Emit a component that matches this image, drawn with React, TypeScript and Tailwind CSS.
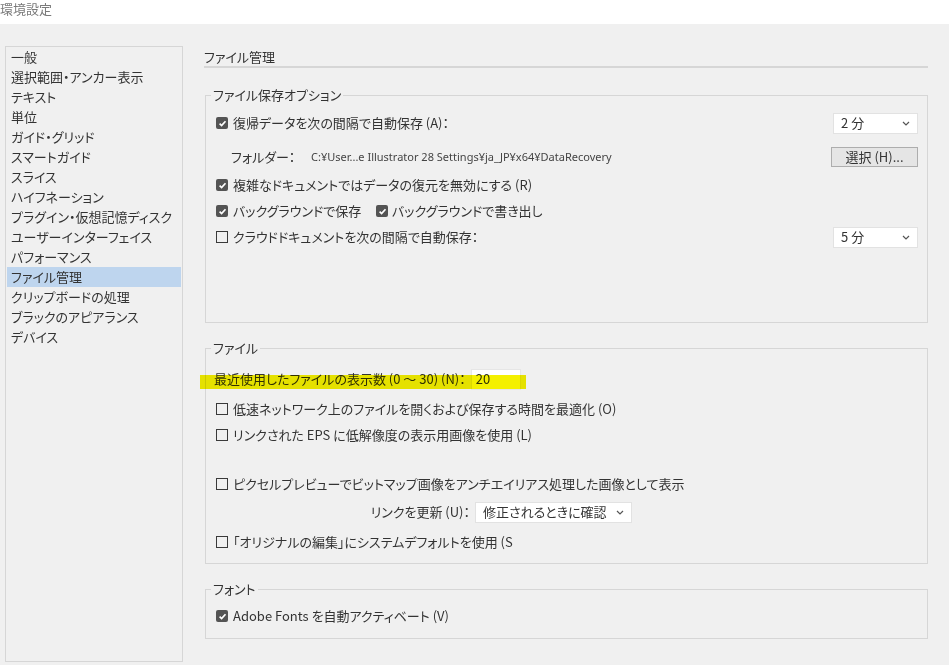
import React from "react";

const menuItems = [
  "一般",
  "選択範囲・アンカー表示",
  "テキスト",
  "単位",
  "ガイド・グリッド",
  "スマートガイド",
  "スライス",
  "ハイフネーション",
  "プラグイン・仮想記憶ディスク",
  "ユーザーインターフェイス",
  "パフォーマンス",
  "ファイル管理",
  "クリップボードの処理",
  "ブラックのアピアランス",
  "デバイス",
];

const Check = ({ on }: { on?: boolean }) =>
  on ? (
    <span className="flex h-[12px] w-[12px] shrink-0 items-center justify-center rounded-[2px] bg-[#545454]">
      <svg width="9" height="9" viewBox="0 0 9 9">
        <path d="M1.6 4.7 3.6 6.6 7.5 2.3" stroke="#fff" strokeWidth="1.7" fill="none" />
      </svg>
    </span>
  ) : (
    <span className="h-[12px] w-[12px] shrink-0 border border-[#3a3a3a]" />
  );

const Chevron = () => (
  <svg width="8" height="5" viewBox="0 0 8 5" className="shrink-0">
    <path d="M1 1 4 4 7 1" stroke="#555" strokeWidth="1.2" fill="none" />
  </svg>
);

const Select = ({ value, w }: { value: string; w: string }) => (
  <div
    className={`flex h-[21px] items-center justify-between border border-[#e2e2e2] bg-white pl-[7px] pr-[7px] ${w}`}
  >
    <span>{value}</span>
    <Chevron />
  </div>
);

const CheckRow = ({
  on,
  label,
  className = "",
}: {
  on?: boolean;
  label: string;
  className?: string;
}) => (
  <div className={`flex h-[26px] items-center pl-[10px] ${className}`}>
    <Check on={on} />
    <span className="ml-[5px] whitespace-nowrap">{label}</span>
  </div>
);

const Group = ({
  title,
  className,
  children,
}: {
  title: string;
  className: string;
  children: React.ReactNode;
}) => (
  <fieldset className={`ml-[1px] border border-[#d6d6d6] ${className}`}>
    <legend className="ml-[5px] px-[2px] leading-[18px]">{title}</legend>
    {children}
  </fieldset>
);

export default function App() {
  return (
    <div className="h-[665px] w-[949px] overflow-hidden bg-[#f0f0f0] font-['Noto_Sans_CJK_JP',sans-serif] text-[13px] text-[#333] [font-feature-settings:'palt']">
      {/* title bar */}
      <div className="flex h-[24px] items-start bg-white pt-[1px]">
        <div className="leading-[16px] text-[#7a7a7a]">環境設定</div>
      </div>

      <div className="flex">
        {/* sidebar */}
        <div className="ml-[5px] mt-[22px] h-[616px] w-[178px] border border-[#d6d6d6] px-[1px]">
          {menuItems.map((item) => (
            <div
              key={item}
              className={`h-[20px] pl-[4px] leading-[20px] whitespace-nowrap ${
                item === "ファイル管理" ? "bg-[#bed5ee]" : ""
              }`}
            >
              {item}
            </div>
          ))}
        </div>

        {/* content */}
        <div className="ml-[21px] mt-[22px] w-[724px]">
          <div className="h-[22px] border-b-2 border-[#d6d6d6] pt-[2px] leading-[18px]">ファイル管理</div>

          <Group title="ファイル保存オプション" className="mt-[18px] h-[237px]">
            <div className="mt-[8px] flex h-[22px] items-center pl-[10px] pr-[9px]">
              <Check on />
              <span className="ml-[5px]">復帰データを次の間隔で自動保存 (A)：</span>
              <div className="ml-auto">
                <Select value="2 分" w="w-[85px]" />
              </div>
            </div>
            <div className="mt-[12px] flex h-[22px] items-center pl-[25px] pr-[9px]">
              <span className="w-[80px]">フォルダー：</span>
              <span className="font-['Noto_Sans',sans-serif] text-[11px] text-[#444]">
                C:¥User...e Illustrator 28 Settings¥ja_JP¥x64¥DataRecovery
              </span>
              <div className="ml-auto flex h-[20px] w-[87px] items-center justify-center border border-[#adadad] bg-[#e5e5e5]">
                選択 (H)...
              </div>
            </div>
            <CheckRow on label="複雑なドキュメントではデータの復元を無効にする (R)" className="mt-[4px]" />
            <div className="flex h-[26px] items-center pl-[10px]">
              <div className="flex w-[160px] items-center">
                <Check on />
                <span className="ml-[5px]">バックグラウンドで保存</span>
              </div>
              <Check on />
              <span className="ml-[4px]">バックグラウンドで書き出し</span>
            </div>
            <div className="flex h-[26px] items-center pl-[10px] pr-[9px]">
              <Check />
              <span className="ml-[5px]">クラウドドキュメントを次の間隔で自動保存：</span>
              <div className="ml-auto">
                <Select value="5 分" w="w-[85px]" />
              </div>
            </div>
          </Group>

          <Group title="ファイル" className="mt-[16px] h-[225px]">
            <div className="relative mt-[11px] flex h-[22px] items-center pl-[8px]">
              <span>最近使用したファイルの表示数 (0 〜 30) (N)：</span>
              <div className="ml-[5px] flex h-[21px] w-[50px] items-center border border-[#e6e6e6] bg-white pl-[4px]">20</div>
              {/* highlighter annotation */}
              <div className="pointer-events-none absolute left-[-6px] top-[7px] h-[14px] w-[326px] bg-[#f4f000] mix-blend-multiply" />
            </div>
            <CheckRow label="低速ネットワーク上のファイルを開くおよび保存する時間を最適化 (O)" className="mt-[6px]" />
            <CheckRow label="リンクされた EPS に低解像度の表示用画像を使用 (L)" />
            <CheckRow
              label="ピクセルプレビューでビットマップ画像をアンチエイリアス処理した画像として表示"
              className="mt-[23px]"
            />
            <div className="mt-[4px] flex h-[22px] items-center">
              <span className="w-[264px] text-right">リンクを更新 (U)：</span>
              <div className="ml-[5px]">
                <Select value="修正されるときに確認" w="w-[157px]" />
              </div>
            </div>
            <CheckRow label="「オリジナルの編集」にシステムデフォルトを使用 (S" className="mt-[6px]" />
          </Group>

          <Group title="フォント" className="mt-[16px] h-[59px]">
            <CheckRow on label="Adobe Fonts を自動アクティベート (V)" className="mt-[5px]" />
          </Group>
        </div>
      </div>
    </div>
  );
}
